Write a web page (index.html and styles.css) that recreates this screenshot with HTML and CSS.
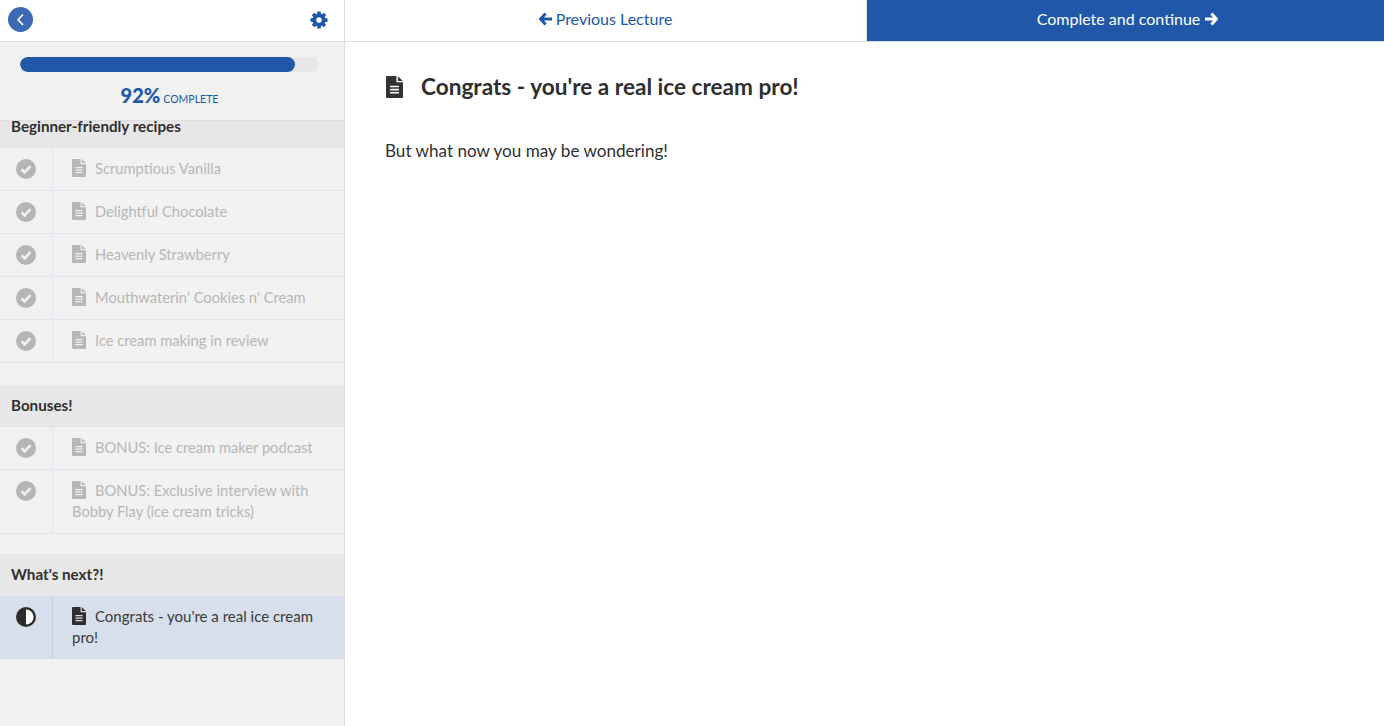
FILE: index.html
```html
<!DOCTYPE html>
<html lang="en">
<head>
<meta charset="utf-8">
<title>Congrats - you're a real ice cream pro!</title>
<link rel="stylesheet" href="styles.css">
</head>
<body>
<svg class="defs" width="0" height="0" aria-hidden="true">
  <symbol id="file" viewBox="0 0 14 18">
    <path fill-rule="evenodd" d="M1 0H8.6V5.2H14V17a1 1 0 0 1-1 1H1a1 1 0 0 1-1-1V1a1 1 0 0 1 1-1ZM9.8 0.2 13.8 4.1H9.8ZM3.4 8v1.3h7.2V8ZM3.4 10.5v1.3h7.2v-1.3ZM3.4 13v1.3h7.2V13Z"/>
  </symbol>
  <symbol id="check" viewBox="0 0 20 20">
    <circle cx="10" cy="10" r="10" fill="#b5b5b5"/>
    <path d="M5.6 10.4 8.6 13.3 14.5 7.2" fill="none" stroke="#f1f1f1" stroke-width="2.6"/>
  </symbol>
</svg>
<div class="app">
  <aside class="sidebar">
    <div class="side-top">
      <a class="back" href="#"><svg width="25" height="25" viewBox="0 0 25 25"><circle cx="12.5" cy="12.5" r="12.5" fill="#3b69b4"/><path d="M15 7.5 10 12.7 15 17.8" fill="none" stroke="#fff" stroke-width="1.7"/></svg></a>
      <svg class="gear" width="20" height="20" viewBox="0 0 1792 1792"><path fill="#2057a8" d="M1152 896q0-106-75-181t-181-75-181 75-75 181 75 181 181 75 181-75 75-181zm512-109v222q0 12-8 23t-20 13l-185 28q-19 54-39 91 35 50 107 138 10 12 10 25t-9 23q-27 37-99 108t-94 71q-12 0-26-9l-138-108q-44 23-91 38-16 136-29 186-7 28-36 28h-222q-14 0-24.5-8.5t-11.5-21.5l-28-184q-49-16-90-37l-141 107q-10 9-25 9-14 0-25-11-126-114-165-168-7-10-7-23 0-12 8-23 15-21 51-66.5t54-70.5q-27-50-41-99l-183-27q-13-2-21-12.5t-8-23.5v-222q0-12 8-23t19-13l186-28q14-46 39-92-40-57-107-138-10-12-10-24 0-10 9-23 26-36 98.5-107.5t94.5-71.5q13 0 26 10l138 107q44-23 91-38 16-136 29-186 7-28 36-28h222q14 0 24.5 8.5t11.5 21.5l28 184q49 16 90 37l142-107q9-9 24-9 13 0 25 10 129 119 165 170 7 8 7 22 0 12-8 23-15 21-51 66.5t-54 70.5q26 50 41 98l183 28q13 2 21 12.5t8 23.5z"/></svg>
    </div>
    <div class="progress-box">
      <div class="track"><div class="fill" style="width:92%"></div></div>
      <div class="pct"><b>92%</b> <span>COMPLETE</span></div>
    </div>
    <div class="list">
      <section class="section first">
        <h3>Beginner-friendly recipes</h3>
        <div class="row"><div class="st"><svg width="20" height="20"><use href="#check"/></svg></div><div class="lab"><svg class="fi" width="14" height="18"><use href="#file"/></svg>Scrumptious Vanilla</div></div>
        <div class="row"><div class="st"><svg width="20" height="20"><use href="#check"/></svg></div><div class="lab"><svg class="fi" width="14" height="18"><use href="#file"/></svg>Delightful Chocolate</div></div>
        <div class="row"><div class="st"><svg width="20" height="20"><use href="#check"/></svg></div><div class="lab"><svg class="fi" width="14" height="18"><use href="#file"/></svg>Heavenly Strawberry</div></div>
        <div class="row"><div class="st"><svg width="20" height="20"><use href="#check"/></svg></div><div class="lab"><svg class="fi" width="14" height="18"><use href="#file"/></svg>Mouthwaterin' Cookies n' Cream</div></div>
        <div class="row"><div class="st"><svg width="20" height="20"><use href="#check"/></svg></div><div class="lab"><svg class="fi" width="14" height="18"><use href="#file"/></svg>Ice cream making in review</div></div>
      </section>
      <section class="section tight">
        <h3>Bonuses!</h3>
        <div class="row"><div class="st"><svg width="20" height="20"><use href="#check"/></svg></div><div class="lab"><svg class="fi" width="14" height="18"><use href="#file"/></svg>BONUS: Ice cream maker podcast</div></div>
        <div class="row"><div class="st"><svg width="20" height="20"><use href="#check"/></svg></div><div class="lab"><svg class="fi" width="14" height="18"><use href="#file"/></svg>BONUS: Exclusive interview with Bobby Flay (ice cream tricks)</div></div>
      </section>
      <section class="section">
        <h3 class="flat">What's next?!</h3>
        <div class="row active"><div class="st"><svg width="20" height="20" viewBox="0 0 20 20"><circle cx="10" cy="10" r="10" fill="#2d2d2d"/><path d="M10 2.4a7.6 7.6 0 0 1 0 15.2Z" fill="#fff"/></svg></div><div class="lab"><svg class="fi" width="14" height="18"><use href="#file"/></svg>Congrats - you're a real ice cream pro!</div></div>
      </section>
    </div>
  </aside>
  <main class="main">
    <nav class="topnav">
      <a class="prev" href="#"><svg width="14" height="14" viewBox="0 0 14 14"><path d="M6.6 1.6 1.6 7l5 5.4M2 7h11" fill="none" stroke="#2057a8" stroke-width="3"/></svg> Previous Lecture</a>
      <a class="next" href="#">Complete and continue <svg width="14" height="14" viewBox="0 0 14 14"><path d="M7.4 1.6 12.4 7l-5 5.4M12 7H1" fill="none" stroke="#fff" stroke-width="3"/></svg></a>
    </nav>
    <article class="content">
      <h1><svg class="h-icon" width="19" height="22" viewBox="0 0 14 18"><use href="#file"/></svg><span>Congrats - you're a real ice cream pro!</span></h1>
      <p>But what now you may be wondering!</p>
    </article>
  </main>
</div>
</body>
</html>
```
FILE: styles.css
```css
* { box-sizing: border-box; }
html, body { margin: 0; height: 100%; }
body { font-family: Lato, "Open Sans", sans-serif; color: #2f2f2f; background: #fff; overflow: hidden; }
.defs { position: absolute; }
a { text-decoration: none; }
.app { display: flex; height: 726px; }
.sidebar { width: 345px; flex: none; background: #f1f1f1; border-right: 1px solid #dcdcdc; display: flex; flex-direction: column; }
.side-top { height: 42px; flex: none; background: #fff; border-bottom: 1px solid #dcdcdc; display: flex; align-items: center; justify-content: space-between; padding: 0 15px 2px 8px; }
.back { display: flex; }
.gear { display: block; }
.progress-box { height: 79px; flex: none; padding: 15px 25px 0 20px; border-bottom: 1px solid #dedede; }
.track { height: 15px; border-radius: 8px; background: #e7e7e7; overflow: hidden; }
.fill { height: 100%; border-radius: 8px; background: #2057a8; }
.pct { display: flex; justify-content: center; align-items: baseline; gap: 3px; color: #2057a8; margin-top: 10px; line-height: 26px; }
.pct b { font-size: 20px; font-weight: 900; }
.pct span { font-size: 10.5px; }
.list { flex: 1; overflow: hidden; }
.section { margin-bottom: 22px; }
.section.first { margin-top: -15px; }
.section.tight { margin-bottom: 20px; }
.section h3 { margin: 0; height: 42px; padding: 0 11px; background: #e7e7e7; border-bottom: 1px solid #dee2e9; font-size: 15.2px; font-weight: 700; line-height: 41px; color: #2f2f2f; }
.section h3.flat { border-bottom: 0; }
.row { display: flex; border-bottom: 1px solid #e0e6ef; }
.st { width: 53px; flex: none; border-right: 1px solid #e0e6ef; padding: 11px 0 0 16px; }
.st svg { display: block; }
.lab { flex: 1; padding: 10px 24px 11px 19px; font-size: 14.7px; line-height: 21px; color: #b7b7b7; }
.fi { fill: #b7b7b7; vertical-align: -3px; margin-right: 9px; }
.row.active { background: #d6dfeb; border-bottom: 0; }
.row.active .st { border-right-color: #c3d1e4; }
.row.active .lab { color: #3a3a3a; font-size: 15px; }
.row.active .fi { fill: #2f2f2f; }
.main { flex: 1; min-width: 0; }
.topnav { display: flex; height: 42px; border-bottom: 1px solid #dcdcdc; }
.prev, .next { display: flex; align-items: center; justify-content: center; gap: 4px; font-size: 16px; height: 41px; padding-bottom: 4px; }
.prev { width: 522px; flex: none; color: #2057a8; border-right: 1px solid #dcdcdc; gap: 3px; }
.next { flex: 1; color: #fff; background: #2057a8; padding-left: 4px; }
.content { padding: 34px 40px; }
.content h1 { display: flex; align-items: center; margin: 0; font-size: 22.6px; font-weight: 700; line-height: 22px; color: #2f2f2f; }
.h-icon { fill: #333; margin-right: 17px; flex: none; }
.content p { margin: 41px 0 0; font-size: 17.1px; line-height: 24px; color: #2f2f2f; }
```
